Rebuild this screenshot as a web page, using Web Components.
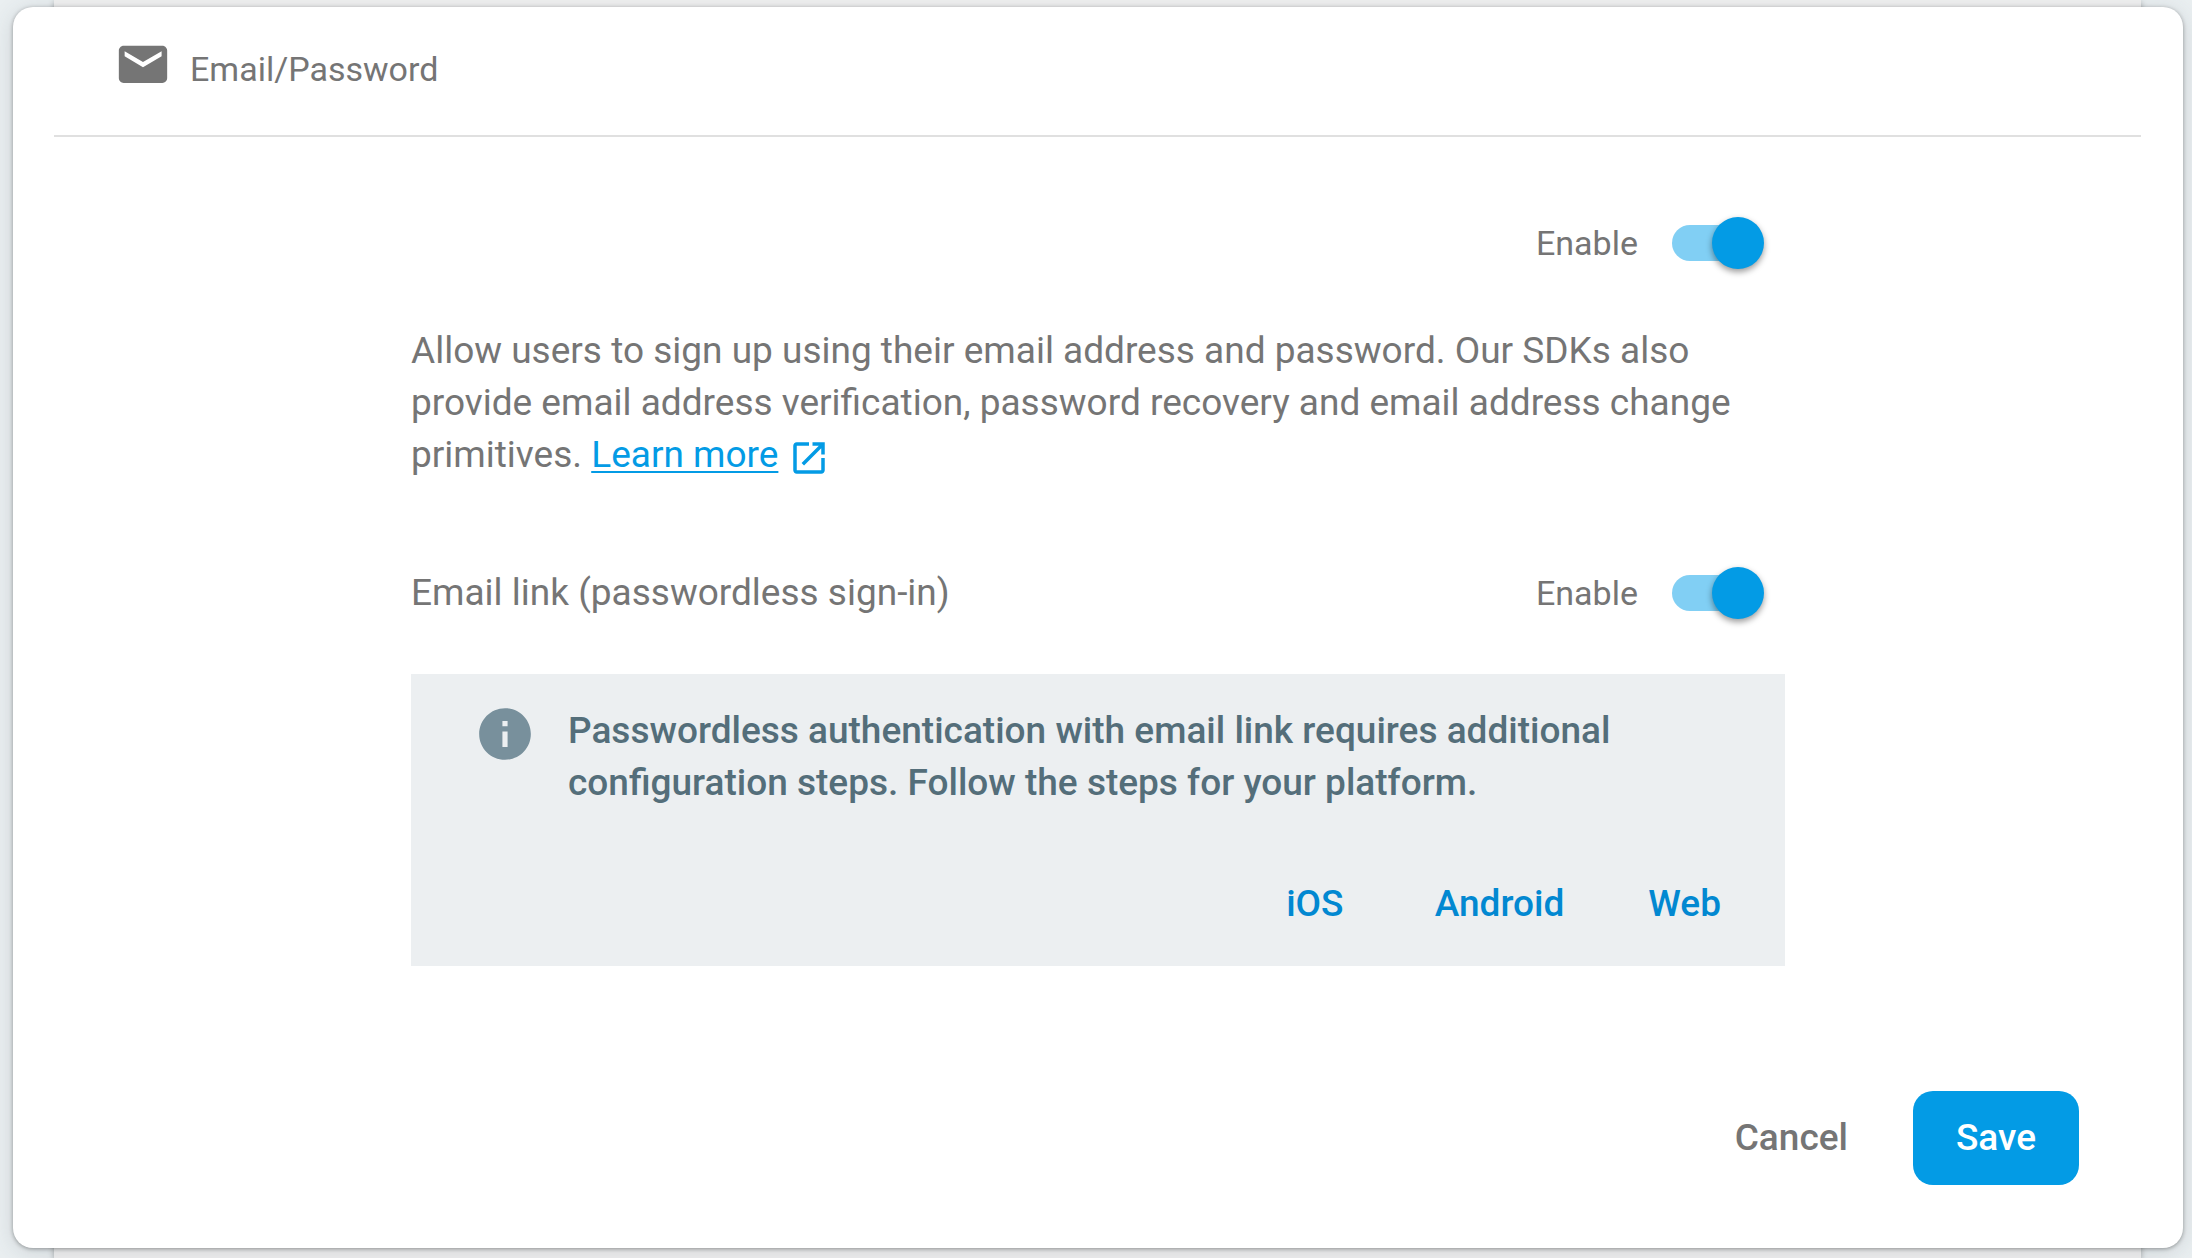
<!DOCTYPE html>
<html lang="en">
<head>
<meta charset="utf-8">
<meta name="viewport" content="width=device-width, initial-scale=1">
<title>Sign-in provider</title>
<style>
  html { background: #eaeff1; }
  body { margin: 0; font-family: Roboto, "Liberation Sans", sans-serif; font-size: 37px; line-height: 52px; color: #757575; }
</style>
</head>
<body>
<provider-page>
  <provider-card>
    <provider-header slot="header">Email/Password</provider-header>
    <setting-row><toggle-switch label="Enable"></toggle-switch></setting-row>
    <provider-description>Allow users to sign up using their email address and password. Our SDKs also provide email address verification, password recovery and email address change primitives. <external-link href="#learn">Learn more</external-link></provider-description>
    <setting-row><span slot="label">Email link (passwordless sign-in)</span><toggle-switch label="Enable"></toggle-switch></setting-row>
    <info-callout>Passwordless authentication with email link requires additional configuration steps. Follow the steps for your platform.
      <platform-link slot="actions" href="#ios">iOS</platform-link>
      <platform-link slot="actions" href="#android">Android</platform-link>
      <platform-link slot="actions" href="#web">Web</platform-link>
    </info-callout>
    <action-button slot="actions">Cancel</action-button>
    <action-button slot="actions" variant="primary">Save</action-button>
  </provider-card>
</provider-page>

<script>
  const define = (name, html, setup) => {
    const template = document.createElement('template');
    template.innerHTML = html;
    customElements.define(name, class extends HTMLElement {
      constructor() {
        super();
        this.attachShadow({ mode: 'open' }).append(template.content.cloneNode(true));
      }
      connectedCallback() { if (setup) setup(this, this.shadowRoot); }
    });
  };

  define('provider-page', `
    <style>
      :host { display: grid; min-height: 100vh; overflow: hidden; }
      .list, main { grid-area: 1 / 1; }
      .list { margin: 0 51px 0 54px; background: #f1f1f1; box-shadow: 0 2px 6px rgba(0,0,0,.3); }
      main { padding: 7px 9px 10px 13px; }
    </style>
    <div class="list"></div>
    <main><slot></slot></main>`);

  define('provider-card', `
    <style>
      :host { display: block; background: #fff; border-radius: 20px; box-shadow: 0 1px 4px rgba(0,0,0,.35), 0 4px 24px rgba(55,71,79,.16); }
      header { margin: 0 42px 0 41px; border-bottom: 2px solid #e0e0e0; }
      .content { max-width: 1374px; margin: 0 auto; padding: 80px 40px 0; }
      footer { display: flex; justify-content: flex-end; align-items: center; gap: 22px; padding: 125px 104px 63px; }
    </style>
    <header><slot name="header"></slot></header>
    <div class="content"><slot></slot></div>
    <footer><slot name="actions"></slot></footer>`);

  define('provider-header', `
    <style>
      :host { display: block; }
      h2 { display: flex; align-items: center; gap: 18px; margin: 0; padding: 33px 60px 37px; font-size: 34px; font-weight: 400; line-height: 58px; }
      svg { display: block; width: 58px; height: 58px; margin-top: -8px; }
    </style>
    <h2><svg viewBox="0 0 24 24" fill="currentColor" aria-hidden="true"><path d="M20 4H4c-1.1 0-2 .9-2 2v11.4c0 1.1.9 2 2 2h16c1.1 0 2-.9 2-2V6c0-1.1-.9-2-2-2zm-.3 4.4L12 12.9 4.4 8.4V6.3l7.6 4.5 7.7-4.5z"/></svg><slot></slot></h2>`);

  define('setting-row', `
    <style>
      :host { display: flex; align-items: center; justify-content: space-between; padding-right: 21px; }
    </style>
    <div><slot name="label"></slot></div>
    <slot></slot>`);

  define('toggle-switch', `
    <style>
      :host { display: block; }
      label { display: flex; align-items: center; gap: 34px; font-size: 34px; cursor: pointer; }
      input { appearance: none; display: grid; align-items: center; width: 92px; height: 52px; margin: 0; cursor: pointer; }
      input:not(:checked) { filter: grayscale(1); }
      input::before, input::after { content: ""; grid-area: 1 / 1; }
      input::before { width: 76px; height: 36px; border-radius: 18px; background: #81cff4; }
      input::after { width: 52px; height: 52px; border-radius: 50%; background: #039be5; box-shadow: 0 3px 6px rgba(0,0,0,.4); }
      input:checked::after { justify-self: end; }
    </style>
    <label><span></span><input type="checkbox" role="switch" checked></label>`,
    (host, root) => { root.querySelector('span').textContent = host.getAttribute('label'); });

  define('provider-description', `
    <style>
      :host { display: block; }
      p { margin: 56px 0 86px; }
    </style>
    <p><slot></slot></p>`);

  define('external-link', `
    <style>
      :host { display: inline; }
      a { color: #039be5; text-decoration: none; white-space: nowrap; }
      span { text-decoration: underline; text-decoration-thickness: 2px; text-underline-offset: 4px; }
      svg { width: 42px; height: 42px; margin-left: 10px; vertical-align: -12px; }
    </style>
    <a><span><slot></slot></span><svg viewBox="0 0 24 24" fill="currentColor" aria-hidden="true"><path d="M19 19H5V5h7V3H5c-1.11 0-2 .9-2 2v14c0 1.1.89 2 2 2h14c1.1 0 2-.9 2-2v-7h-2v7zM14 3v2h3.59l-9.83 9.83 1.41 1.41L19 6.41V10h2V3h-7z"/></svg></a>`,
    (host, root) => { root.querySelector('a').href = host.getAttribute('href'); });

  define('info-callout', `
    <style>
      :host { display: block; margin-top: 55px; padding: 31px 32px 24px 63px; background: #eceff1; color: #546e7a; }
      .message { display: flex; align-items: flex-start; gap: 32px; padding-right: 100px; font-weight: 500; }
      svg { flex: none; width: 62px; height: 62px; margin: -2px 0; color: #78909c; }
      p { margin: 0; }
      nav { display: flex; justify-content: flex-end; gap: 20px; margin-top: 57px; }
    </style>
    <div class="message">
      <svg viewBox="0 0 24 24" fill="currentColor" aria-hidden="true"><path d="M12 2C6.48 2 2 6.48 2 12s4.48 10 10 10 10-4.48 10-10S17.52 2 12 2zm1 15h-2v-6h2v6zm0-8h-2V7h2v2z"/></svg>
      <p><slot></slot></p>
    </div>
    <nav><slot name="actions"></slot></nav>`);

  define('platform-link', `
    <style>
      :host { display: block; }
      a { display: block; box-sizing: border-box; min-width: 136px; padding: 12px 32px; text-align: center; font-weight: 500; color: #0288d1; text-decoration: none; }
    </style>
    <a><slot></slot></a>`,
    (host, root) => { root.querySelector('a').href = host.getAttribute('href'); });

  define('action-button', `
    <style>
      :host { display: block; }
      button { display: block; padding: 21px 43px; border: 0; border-radius: 20px; background: none; color: inherit; font: inherit; font-weight: 500; cursor: pointer; }
      :host([variant="primary"]) button { background: #039be5; color: #fff; }
    </style>
    <button type="button"><slot></slot></button>`);
</script>
</body>
</html>
